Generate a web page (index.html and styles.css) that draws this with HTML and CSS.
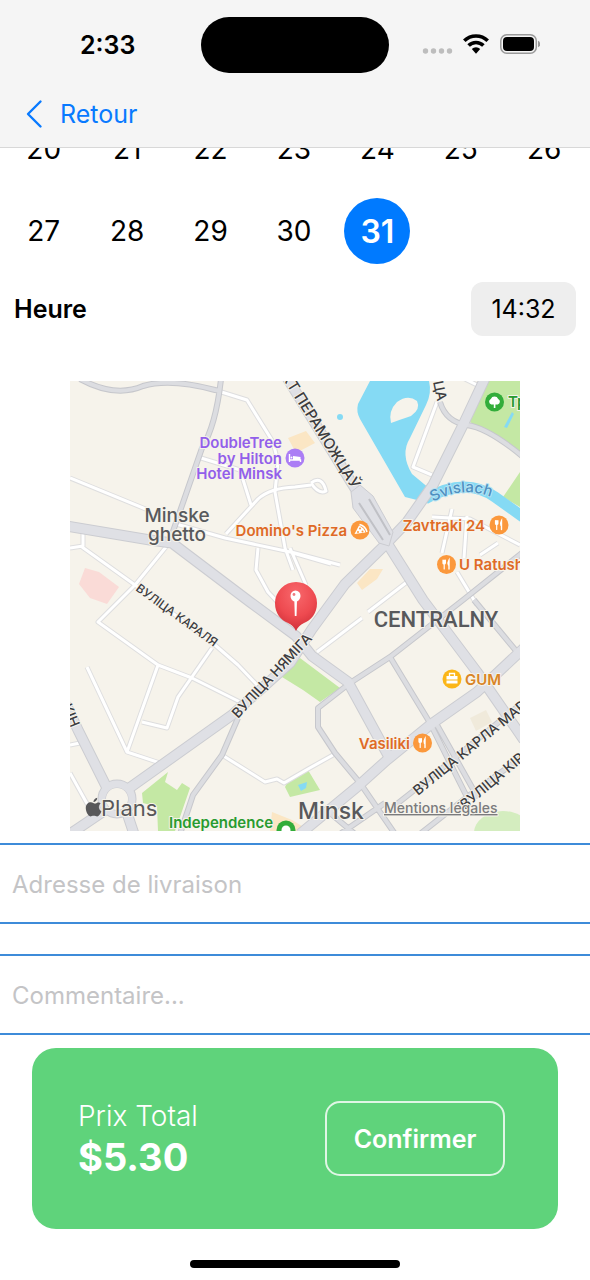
FILE: index.html
```html
<!DOCTYPE html>
<html lang="fr">
<head>
<meta charset="utf-8">
<meta name="viewport" content="width=device-width, initial-scale=1">
<title>Livraison</title>
<link rel="stylesheet" href="styles.css">
</head>
<body>
<header class="top">
  <div class="status">
    <span class="clock">2:33</span>
    <span class="island"></span>
    <svg class="signals" width="120" height="24" viewBox="0 0 120 24" aria-hidden="true">
      <g fill="#bdbdbd"><circle cx="5.500" cy="18" r="2.700"/><circle cx="13.500" cy="18" r="2.700"/><circle cx="21.500" cy="18" r="2.700"/><circle cx="29.500" cy="18" r="2.700"/></g>
      <g fill="none" stroke="#000" stroke-width="3.600"><path d="M44.300 7.800a16.500 16.500 0 0 1 23.400 0"/><path d="M48.600 12.500a10.500 10.500 0 0 1 14.800 0"/></g>
      <path d="M56 20.800l-4.200-4.800a6 6 0 0 1 8.400 0z"/>
      <rect x="80.800" y="1.800" width="35.500" height="18.400" rx="6" fill="none" stroke="#999" stroke-width="1.500"/>
      <rect x="83" y="4" width="31" height="14" rx="4"/>
      <path d="M118 7.800c3 1 3 5.400 0 6.400z" fill="#999"/>
    </svg>
  </div>
  <a class="back" href="#">
    <svg width="18" height="30" viewBox="0 0 18 30" aria-hidden="true"><path d="M15.500 2.500L3 15l12.500 12.500" fill="none" stroke="#087aff" stroke-width="2.400" stroke-linecap="round" stroke-linejoin="round"/></svg>
    Retour
  </a>
</header>
<main>
  <section class="days" aria-label="Date">
    <button>20</button><button>21</button><button>22</button><button>23</button><button>24</button><button>25</button><button>26</button>
    <button>27</button><button>28</button><button>29</button><button>30</button><button class="chosen" aria-pressed="true">31</button>
  </section>
  <div class="hour">
    <span class="hour-label" id="heure">Heure</span>
    <button class="hour-value" aria-describedby="heure">14:32</button>
  </div>
  <div class="map-wrap">
  <svg class="map" viewBox="70 381 450 450" role="group" aria-label="Plan de Minsk">
    <defs>
      <radialGradient id="ball" cx=".5" cy=".25" r=".75"><stop offset="0" stop-color="#f8686c"/><stop offset=".6" stop-color="#ee4a50"/><stop offset="1" stop-color="#cf2f38"/></radialGradient>
      <path id="river-line" d="M433 502Q464 484 496 499"/>
      <g id="fork" fill="none" stroke="#fff" stroke-linecap="round"><path d="M-3.500-4.500v3q0 1 1.200 1t1.200-1v-3M-2.300-4.500v9" stroke-width="1.200"/><path d="M2.500 4.500v-9q-1.500 2.500-.5 5" stroke-width="1.400"/></g>
      <g id="roads-small">
        <path d="M215 390L247 400 273 442 278 462 275 492 285 548 293 570M70 478L148 510M176 524L225 538 295 553 340 565M83 533V546L70 548M82 547L135 585 215 645 238 665 260 688M166 547L135 585 98 622 158 665 192 678 242 703M158 665L127 752M87 667L127 752 160 763M142 722L167 728 178 697 212 648"/>
        <path d="M201 458L240 470 251 505M226 534L258 499Q270 488 295 487L311 485M311 483Q322 475 326 491 319 495 311 483M258 548L256 570 268 592 285 610M290 548L306 585M293 553L331 564M222 755L265 782 277 779 284 783 308 769 333 755M70 745L80 743M70 773L90 809"/>
        <path d="M437 402L413 467 432 475M457 375L477 385M317 652L362 618M368 612L407 582M432 517L470 519 520 545M452 509L442 553M467 516L464 558M480 555L498 543M457 572L477 605"/>
      </g>
      <g id="roads-mid">
        <path d="M80 379Q115 398 143 386 170 378 215 390L221 391M221 379Q216 425 202 448L170 540M238 718L222 755 193 795 180 834M440 402Q446 422 467 425T522 456M350 683L390 657 463 600 522 553M350 683L318 708V727L335 753 360 783 395 834M390 657L430 723 467 797M474 600L517 652M437 725L478 798M393 807L440 770 522 703M420 834L467 797 522 757M330 813L355 834M340 834L385 803"/>
      </g>
      <g id="roads-big">
        <path d="M66 526L150 540 172 543 250 602 296 636 312 656 348 682 389 757M107 788L78 730 66 704M107 809L70 834M126 810L134 834M128 789L232 715 290 663 312 629 345 584 387 543 407 522 433 485 463 425 486 376M286 376L356 490 387 543 423 600 477 672 524 740M300 834L357 787 387 760 430 725 477 692 524 648"/>
      </g>
    </defs>
    <rect x="70" y="381" width="450" height="450" fill="#f6f3eb"/>
    <g fill="#c4e8a4">
      <path d="M485 381H520V455L470 422zM520 472L503 497 520 507zM282 677L300 658 340 688 320 702 303 690zM142 793L168 772 165 782 177 790 182 783 190 788 180 817 175 831H158L157 807 143 803zM285 787L290 777 308 770 320 790 290 797z"/>
      <ellipse cx="503" cy="833" rx="29" ry="22" fill="#d4edbf"/>
    </g>
    <path d="M85 568L99 572 119 587 107 604 90 598 79 584z" fill="#fadbd7"/>
    <path d="M288 438L306 431 315 443 296 453zM357 583L370 569H383L377 579 362 590zM272 812L292 820 310 831H270z" fill="#fbe6c4"/>
    <path d="M470 718L486 710 492 722 476 731z" fill="#f0eadb"/>
    <path d="M370 381L358 404Q356 412 360 419L405 497 425 502 430 489 412 474Q400 454 410 438L426 405Q432 393 429 381z" fill="#85daf4"/>
    <path d="M391 423Q388 411 397 402 408 394 417 401 421 409 411 416 399 420 391 423z" fill="#f6f3eb"/>
    <path d="M425 499Q465 476 495 497L523 517" fill="none" stroke="#85daf4" stroke-width="11"/>
    <circle cx="340" cy="417" r="3" fill="#85daf4"/><path d="M504 427l8-15 2 2-7 14zM298 785l9-3-1 6-5 3z" fill="#85daf4"/>
    <g fill="none" stroke-linejoin="round">
      <use href="#roads-small" stroke="#dededf" stroke-width="5"/><use href="#roads-small" stroke="#fff" stroke-width="3"/>
      <use href="#roads-mid" stroke="#c6c7cc" stroke-width="6"/><use href="#roads-big" stroke="#cbccd1" stroke-width="11"/>
      <circle cx="117" cy="799" r="15" stroke="#cbccd1" stroke-width="9"/>
      <use href="#roads-mid" stroke="#dcdde1" stroke-width="4"/><use href="#roads-big" stroke="#dfe0e5" stroke-width="9"/>
      <circle cx="117" cy="799" r="15" stroke="#dfe0e5" stroke-width="7"/>
    </g>
    <circle cx="117" cy="799" r="11" fill="#f6f3eb"/>
    <path d="M351 492L360 485 373 496 393 532 389 546 379 543 353 508z" fill="#dfe0e5" stroke="#cbccd1"/>
    <path d="M359 503L383 540M369 499L390 535" fill="none" stroke="#c0c1c6" stroke-width="2"/>
    <g class="street">
      <text class="street-large" transform="translate(281 376) rotate(58)">КТ ПЕРАМОЖЦАЎ</text>
      <text transform="translate(433 382) rotate(78)">ЦА</text>
      <text class="street-small" transform="translate(135 590) rotate(36)">ВУЛІЦА КАРАЛЯ</text>
      <text transform="translate(238 719) rotate(-47)">ВУЛІЦА НЯМІГА</text>
      <text transform="translate(418 796) rotate(-39)">ВУЛІЦА КАРЛА МАРКСА</text>
      <text transform="translate(465 810) rotate(-40)">ВУЛІЦА КІРАВА</text>
      <text transform="translate(62 706) rotate(68)">КІН</text>
    </g>
    <text class="river"><textPath href="#river-line">Svislach</textPath></text>
    <g class="place">
      <text class="area" x="177" y="522">Minske</text><text class="area" x="177" y="541">ghetto</text>
      <text class="district" x="436" y="627">CENTRALNY</text>
      <text class="city" x="331" y="819">Minsk</text>
    </g>
    <g class="poi hotel"><text x="282" y="448">DoubleTree</text><text x="282" y="464">by Hilton</text><text x="282" y="479">Hotel Minsk</text></g>
    <g class="poi food"><text x="347" y="536">Domino's Pizza</text><text x="485" y="531">Zavtraki 24</text><text x="410" y="749">Vasiliki</text><text class="from-left" x="459" y="570">U Ratushi</text><text class="shop from-left" x="465" y="685">GUM</text></g>
    <g class="poi park"><text x="273" y="828">Independence</text><text class="from-left" x="508" y="407">Траецкае</text></g>
    <circle cx="295" cy="458" r="9.500" fill="#ab7df5"/><path d="M289.500 454v8M289.500 460h11v2" fill="none" stroke="#fff" stroke-width="1.400"/><path d="M293 456l7.500 1v3H293z" fill="#fff"/><circle cx="291.500" cy="457.500" r="1" fill="#fff"/>
    <g fill="#fb983c"><circle cx="360" cy="530" r="9.500"/><circle cx="499" cy="525" r="9.500"/><circle cx="446.500" cy="564.500" r="9.500"/><circle cx="422.500" cy="743" r="9.500"/></g>
    <path d="M354.500 534l4.500-8.500q5 2 6.500 7z" fill="#fff"/><path d="M359.500 524.500q6 1.500 7.500 7.500" fill="none" stroke="#fff" stroke-width="1.500"/><g fill="#fb983c"><circle cx="360" cy="528.500" r="1"/><circle cx="358" cy="532" r="1"/><circle cx="362.500" cy="531.500" r="1"/></g>
    <use href="#fork" x="499" y="525"/><use href="#fork" x="446.500" y="564.500"/><use href="#fork" x="422.500" y="743"/>
    <circle cx="452" cy="679" r="9.500" fill="#fbb618"/><path d="M446.500 676h11v3.500h-11zM446.500 680.500h11v3h-11z" fill="#fff"/><path d="M449.500 676v-2.500h5v2.500" fill="none" stroke="#fff" stroke-width="1.300"/>
    <circle cx="494.500" cy="402" r="9.500" fill="#32ad3a"/><path d="M493.800 408v-3.500h-2.500a3 3 0 0 1-.5-5.600 4 4 0 0 1 7.400 0 3 3 0 0 1-.5 5.600h-2.300v3.500z" fill="#fff"/>
    <circle cx="286" cy="830" r="9.500" fill="#32ad3a"/><circle cx="286" cy="830" r="4.500" fill="#fff"/>
    <path d="M275 603a21 21 0 1 1 42 0c0 11-6 17-13 20-4 2-6 4-8 8-2-4-4-6-8-8-7-3-13-9-13-20z" fill="url(#ball)"/>
    <ellipse cx="295.500" cy="596" rx="5" ry="5.500" fill="#fff"/><path d="M294.300 600h2.700l-.5 16h-1.700z" fill="#fff"/><circle cx="294" cy="594.500" r="1.400" fill="#ee7b80"/>
    <g fill="#58585a" transform="translate(9 82) scale(.9)">
      <path d="M97.500 801c1.500-.8 3.700-.4 4.300.8-2.700 2-2.600 7 .9 8.400-1 3-3 5.800-4.700 5.800-1.500 0-2-.8-3.800-.8s-2.500.8-3.800.8c-2.400 0-5.100-5.300-5.100-9.200 0-6.400 5.500-7.600 8.400-5.800 1.300.8 2.400.7 3.800 0zM93.800 800c0-2.500 2-4.500 4.200-4.800.2 2.600-2 4.700-4.200 4.800z"/>
    </g>
    <text class="brand" x="101" y="816">Plans</text>
    <a href="#"><text class="legal" x="384" y="813">Mentions légales</text></a>
  </svg>
  </div>
  <form class="fields">
    <input type="text" placeholder="Adresse de livraison" aria-label="Adresse de livraison">
    <input type="text" placeholder="Commentaire..." aria-label="Commentaire">
  </form>
  <section class="total">
    <div>
      <div class="total-label">Prix Total</div>
      <div class="total-price">$5.30</div>
    </div>
    <button class="confirm">Confirmer</button>
  </section>
</main>
<div class="home-bar"></div>
</body>
</html>
```
FILE: styles.css
```css
* { box-sizing: border-box; }
body { margin: 0; background: #fff; color: #000; font-family: Inter, "Liberation Sans", sans-serif; }
button, input { font: inherit; color: inherit; margin: 0; padding: 0; border: 0; background: none; }

.top { position: relative; z-index: 1; height: 148px; background: #f5f5f5; border-bottom: 1px solid #d8d8d8; }
.status { display: grid; grid-template-columns: 1fr 188px 1fr; align-items: center; height: 89px; }
.clock { padding-left: 80px; font-size: 25px; font-weight: 600; }
.island { height: 56px; border-radius: 28px; background: #000; }
.signals { justify-self: end; margin-right: 50px; }
.back { display: inline-flex; align-items: center; gap: 17px; height: 50px; padding-left: 25px; color: #087aff; font-size: 25px; text-decoration: none; }

.days { display: grid; grid-template-columns: repeat(7, 1fr); grid-auto-rows: 82px; place-items: center; margin-top: -40px; padding: 0 4px 0 2px; font-size: 28px; }
.days .chosen { width: 66px; height: 66px; border-radius: 50%; background: #007aff; color: #fff; font-size: 32px; font-weight: 600; }

.hour { display: flex; align-items: center; justify-content: space-between; margin-top: 10px; padding: 0 14px; }
.hour-label { font-size: 25px; font-weight: 600; }
.hour-value { width: 105px; height: 54px; border-radius: 12px; background: #eee; font-size: 25px; }

.map-wrap { margin-top: 45px; padding: 0 70px; }
.map { display: block; width: 100%; overflow: hidden; }
.map text { paint-order: stroke; stroke: #f6f3eb; stroke-width: 2px; stroke-linejoin: round; }
.street { font-size: 14px; font-weight: 500; fill: #3c3c40; }
.street-large { font-size: 15px; }
.street-small { font-size: 12px; }
.map .river { font-size: 15px; font-weight: 500; fill: #4e8fc0; stroke: #b5e3f4; }
.place { text-anchor: middle; fill: #58595c; font-weight: 500; }
.area { font-size: 19px; }
.district { font-family: Roboto, sans-serif; font-size: 22px; }
.city { font-size: 23px; }
.poi { font-size: 15px; font-weight: 600; text-anchor: end; }
.poi .from-left { text-anchor: start; }
.hotel { fill: #925fea; }
.food { fill: #df6a26; }
.shop { fill: #d98526; }
.park { fill: #289b30; }
.brand { font-size: 22px; fill: #58585a; }
.legal { font-size: 14px; font-weight: 500; fill: #7b7b7d; text-decoration: underline; }

.fields { display: grid; gap: 30px; margin-top: 12px; }
.fields input { width: 100%; height: 81px; padding: 2px 12px 0; border: solid #3d8bd9; border-width: 2px 0; font-size: 24px; }
.fields input::placeholder { color: #c4c4c6; opacity: 1; }

.total { display: flex; align-items: center; justify-content: space-between; height: 181px; margin: 13px 32px 0; padding: 0 53px 0 46px; border-radius: 24px; background: #5fd37b; color: #fff; }
.total-label { font-size: 28px; font-weight: 300; line-height: 36px; }
.total-price { font-size: 38px; font-weight: 700; line-height: 46px; }
.confirm { width: 180px; height: 75px; border: 2px solid #dff6e5; border-radius: 15px; font-size: 25px; font-weight: 600; }
.home-bar { width: 210px; height: 8px; margin: 31px auto 12px; border-radius: 4px; background: #000; }
```
